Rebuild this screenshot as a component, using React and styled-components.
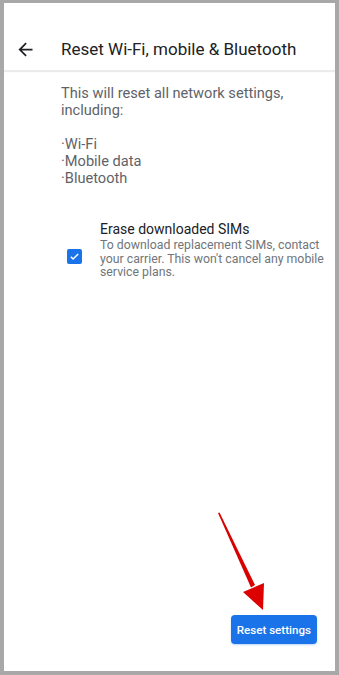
import React from 'react';
import styled, { createGlobalStyle } from 'styled-components';

const GlobalStyle = createGlobalStyle`
  html, body {
    margin: 0;
    padding: 0;
    background: #a8a8a8;
  }
  body {
    font-family: Roboto, "Noto Sans", sans-serif;
  }
`;

const Frame = styled.div`
  position: relative;
  margin: 3px 4px 4px 4px;
  height: calc(100vh - 7px);
  background: #ffffff;
  display: flex;
  flex-direction: column;
  overflow: hidden;
`;

const Header = styled.header`
  height: 68px;
  display: flex;
  align-items: flex-end;
  padding: 0 0 8px 10px;
  gap: 25px;
  box-shadow: 0 1px 1px rgba(0, 0, 0, 0.08);
  border-bottom: 1px solid #ececec;
  box-sizing: border-box;
`;

const BackButton = styled.button`
  width: 22px;
  height: 26px;
  padding: 0;
  border: none;
  background: none;
  display: flex;
  align-items: center;
  justify-content: center;
  color: #202124;
`;

const Title = styled.h1`
  margin: 0;
  font-size: 17px;
  line-height: 26px;
  font-weight: 400;
  color: #202124;
`;

const Body = styled.main`
  flex: 1;
  display: flex;
  flex-direction: column;
  padding: 14px 18px 27px 57px;
`;

const Lead = styled.p`
  margin: 0;
  font-size: 14.6px;
  line-height: 17px;
  color: #5f6368;
  white-space: pre-line;
`;

const OptionRow = styled.label`
  display: flex;
  align-items: flex-start;
  gap: 18px;
  margin-top: 33px;
  margin-left: 6px;
`;

const Check = styled.span`
  flex: none;
  width: 15px;
  height: 15px;
  margin-top: 29px;
  border-radius: 2px;
  background: #1a73e8;
  display: flex;
  align-items: center;
  justify-content: center;
`;

const OptionText = styled.div`
  flex: none;
  width: 224px;
  display: flex;
  flex-direction: column;
`;

const OptionTitle = styled.span`
  font-size: 14px;
  line-height: 18px;
  color: #202124;
`;

const OptionSummary = styled.span`
  font-size: 12.3px;
  line-height: 13.5px;
  color: #70757a;
  margin-top: 1px;
`;

const Spacer = styled.div`
  flex: 1;
`;

const PrimaryButton = styled.button`
  align-self: flex-end;
  height: 29px;
  padding: 0 6px;
  border: none;
  border-radius: 4px;
  background: #1a73e8;
  color: #ffffff;
  font-family: Roboto, sans-serif;
  font-size: 11.6px;
  font-weight: 500;
  box-shadow: 0 1px 2px rgba(26, 115, 232, 0.3);
`;

const Annotation = styled.svg`
  position: absolute;
  left: 0;
  top: 0;
  pointer-events: none;
`;

export default function App() {
  return (
    <>
      <GlobalStyle />
      <Frame>
        <Header>
          <BackButton aria-label="Back">
            <svg width="21" height="21" viewBox="0 0 24 24">
              <path
                d="M20 11H7.83l5.59-5.59L12 4l-8 8 8 8 1.41-1.41L7.83 13H20v-2z"
                fill="currentColor"
              />
            </svg>
          </BackButton>
          <Title>Reset Wi-Fi, mobile &amp; Bluetooth</Title>
        </Header>
        <Body>
          <Lead>
            {'This will reset all network settings,\nincluding:\n\n·Wi-Fi\n·Mobile data\n·Bluetooth'}
          </Lead>
          <OptionRow>
            <Check>
              <svg width="11" height="11" viewBox="0 0 24 24">
                <path
                  d="M4 12.5l5 5L20 6.5"
                  fill="none"
                  stroke="#ffffff"
                  strokeWidth="3.2"
                />
              </svg>
            </Check>
            <OptionText>
              <OptionTitle>Erase downloaded SIMs</OptionTitle>
              <OptionSummary>
                To download replacement SIMs, contact your carrier. This won't cancel any mobile service plans.
              </OptionSummary>
            </OptionText>
          </OptionRow>
          <Spacer />
          <PrimaryButton>Reset settings</PrimaryButton>
        </Body>
        <Annotation width="331" height="668" viewBox="4 3 331 668">
          <polygon points="218,513 219.5,512.6 255,585 251,587.5" fill="#d90000" />
          <polygon points="243,592 264,583 263,610" fill="#dd0000" />
        </Annotation>
      </Frame>
    </>
  );
}
